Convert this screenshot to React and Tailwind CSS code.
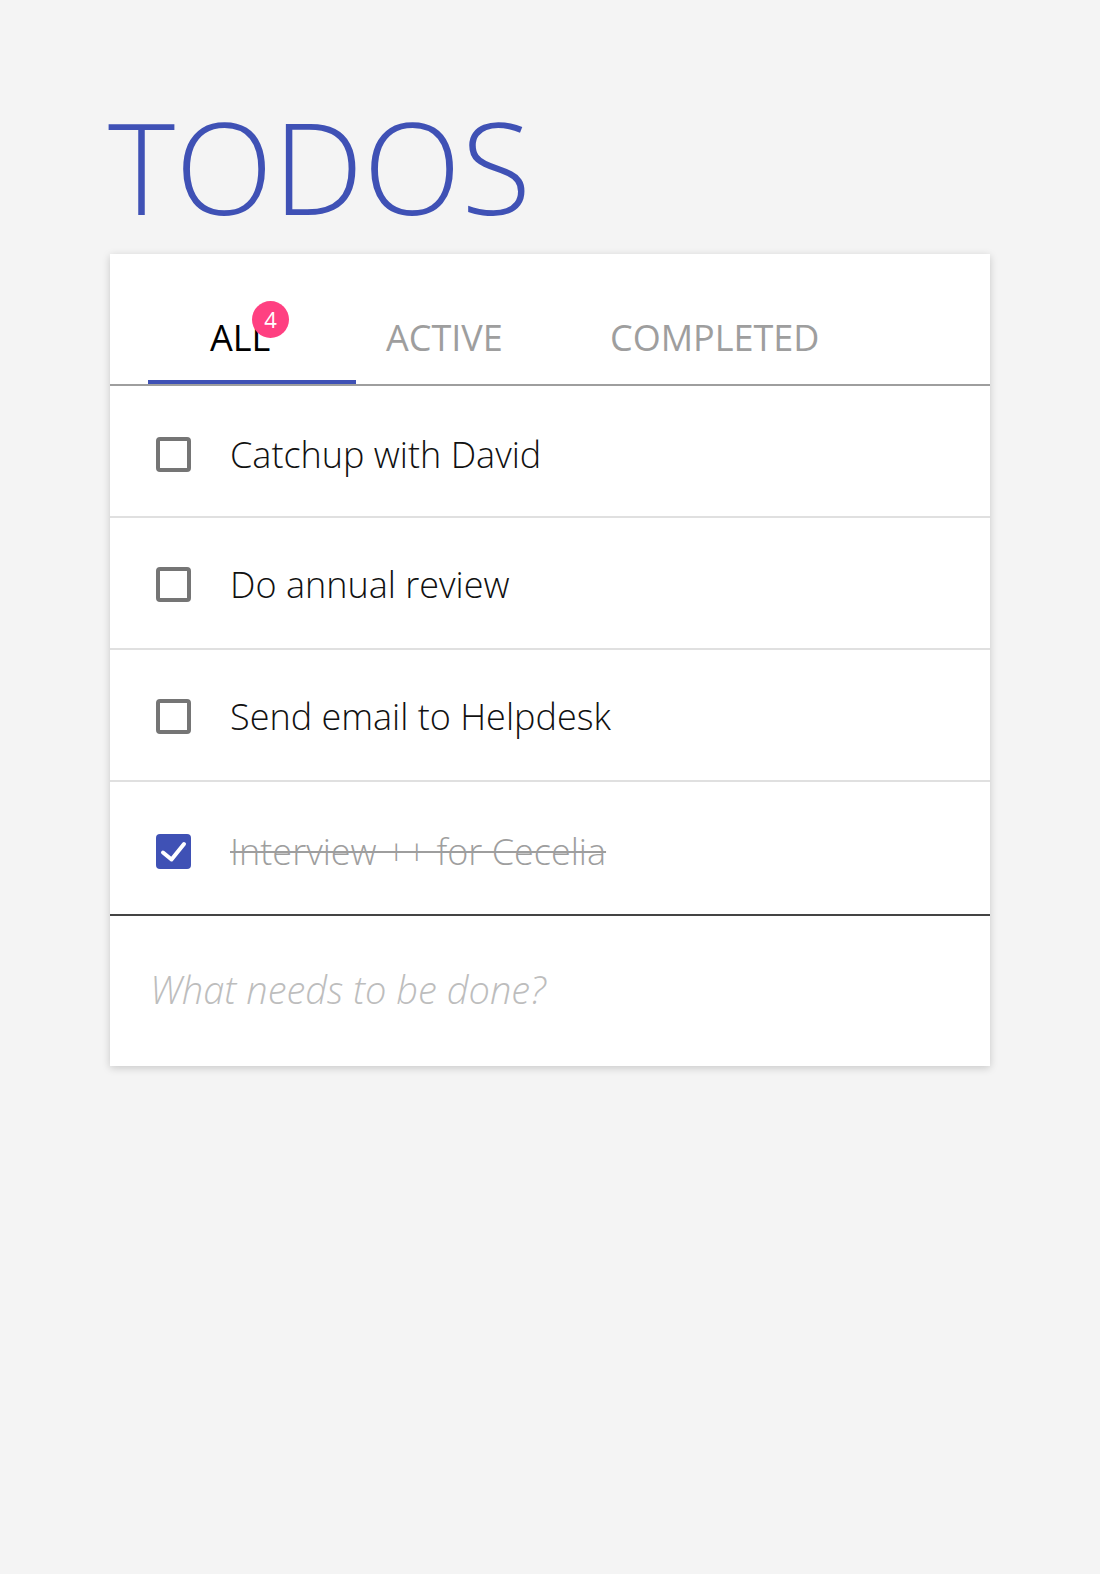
import { useState } from "react";

const todos = [
  { id: 1, text: "Catchup with David", done: false, pad: "pt-[7px]" },
  { id: 2, text: "Do annual review", done: false, pad: "pt-[3px]" },
  { id: 3, text: "Send email to Helpdesk", done: false, pad: "pt-[3px]" },
  { id: 4, text: "Interview ++ for Cecelia", done: true, pad: "pt-[7px]" },
];

function Checkbox({ checked }) {
  if (checked) {
    return (
      <svg width="35" height="35" viewBox="0 0 35 35" className="shrink-0">
        <rect x="0" y="0" width="35" height="35" rx="4" fill="#3f51b5" />
        <polyline
          points="7,18.5 15.5,25.5 28,10"
          fill="none"
          stroke="#fff"
          strokeWidth="4"
          strokeLinecap="round"
          strokeLinejoin="round"
        />
      </svg>
    );
  }
  return <div className="w-[35px] h-[35px] shrink-0 rounded-[4px] border-[4px] border-[#757575] bg-white" />;
}

export default function App() {
  const [items] = useState(todos);

  return (
    <div className="min-h-screen w-full bg-[#f4f4f4] pt-[102px] font-['Open_Sans',sans-serif]">
      <h1 className="ml-[108px] text-[128px] leading-[128px] font-light text-[#3f51b5]">TODOS</h1>

      <div className="ml-[110px] mt-[24px] w-[880px] bg-white shadow-[0_2px_8px_rgba(0,0,0,0.18)]">
        {/* tabs */}
        <div className="flex h-[132px] items-end border-b-2 border-[#9e9e9e] pl-[38px]">
          <div className="w-[208px] border-b-4 border-[#3f51b5] pb-[24px] pl-[62px]">
            <span className="relative block w-fit text-[36px] leading-[36px] text-black">
              ALL
              <span className="absolute left-[42px] top-[-19px] flex h-[37px] w-[37px] items-center justify-center rounded-full bg-[#ff4081] pb-[1px] text-[22px] leading-none text-white">
                4
              </span>
            </span>
          </div>
          <div className="w-[254px] pb-[28px] pl-[30px] text-[36px] leading-[36px] text-[#9e9e9e]">ACTIVE</div>
          <div className="pb-[28px] text-[36px] leading-[36px] text-[#9e9e9e]">COMPLETED</div>
        </div>

        {/* list */}
        {items.map((t, i) => (
          <div
            key={t.id}
            className={
              i === items.length - 1
                ? `flex h-[134px] items-center gap-[39px] pl-[46px] ${t.pad} border-b-2 border-[#444444]`
                : `flex h-[132px] items-center gap-[39px] pl-[46px] ${t.pad} border-b-2 border-[#e0e0e0]`
            }
          >
            <Checkbox checked={t.done} />
            <span
              className={
                t.done
                  ? "text-[36px] leading-[36px] font-light text-[#9e9e9e] line-through decoration-[#9e9e9e] decoration-2"
                  : "text-[36px] leading-[36px] font-light text-[#111]"
              }
            >
              {t.text}
            </span>
          </div>
        ))}

        {/* new todo */}
        <div className="h-[150px] flex items-center pb-[4px]">
          <input
            type="text"
            placeholder="What needs to be done?"
            className="w-full pl-[40px] bg-transparent outline-none text-[38px] font-light italic text-[#111] placeholder:text-[#bdbdbd] placeholder:italic"
          />
        </div>
      </div>
    </div>
  );
}
